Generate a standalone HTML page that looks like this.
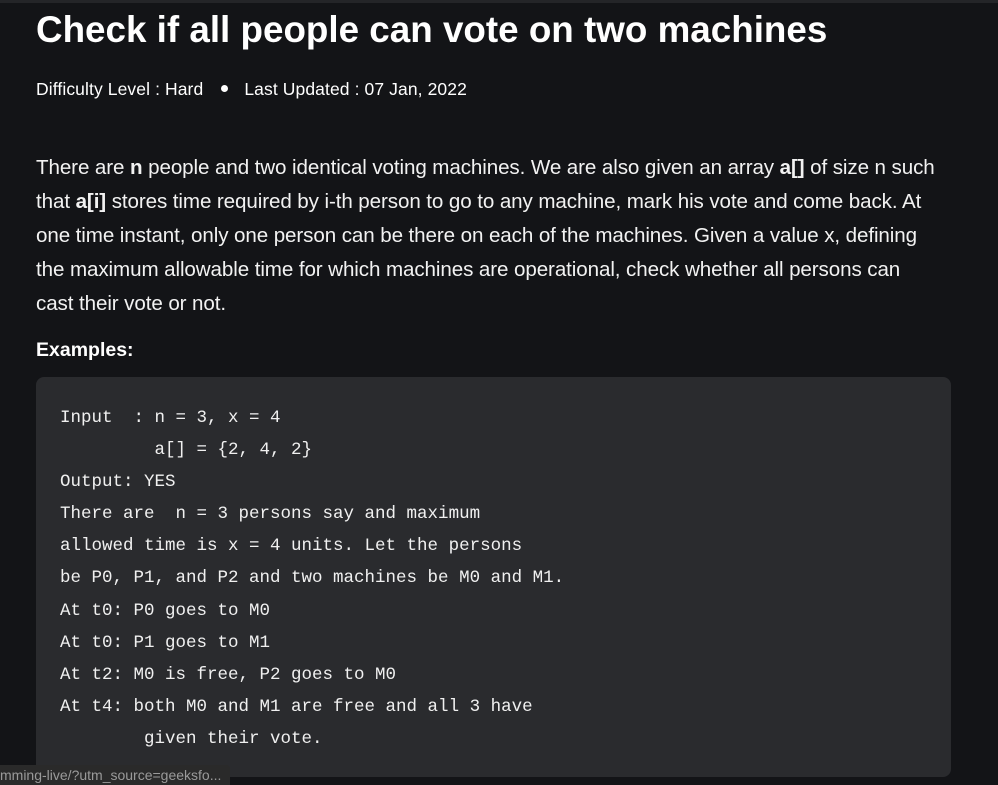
<!DOCTYPE html>
<html><head><style>
html,body{margin:0;padding:0;background:#131417;width:998px;height:785px;overflow:hidden;font-family:"Liberation Sans",sans-serif;color:#fff;position:relative}
.top{position:absolute;left:0;top:0;width:998px;height:3px;background:#242528}
h1{position:absolute;left:36px;top:8px;margin:0;font-size:36.8px;font-weight:bold;letter-spacing:0px;line-height:44px}
.meta{position:absolute;left:36px;top:79px;font-size:17.5px;letter-spacing:0.1px}
.meta .dot{display:inline-block;width:7px;height:7px;border-radius:50%;background:#fff;margin:0 16px 3px 18px;vertical-align:middle}
.p{position:absolute;left:36px;top:151px;width:960px;font-size:20.6px;line-height:34px;letter-spacing:-0.1px;color:#f2f2f2;white-space:nowrap}
.ex{position:absolute;left:36px;top:339px;font-size:19.5px;font-weight:bold}
.code{position:absolute;left:36px;top:377px;width:915px;height:400px;background:#2a2b2e;border-radius:8px}
pre{position:absolute;left:60px;top:402px;margin:0;font-family:"Liberation Mono",monospace;font-size:17.5px;line-height:32.1px;color:#f0f0f0}
.status{position:absolute;left:0;top:765px;width:230px;height:20px;background:#2a2a2a;border-top-right-radius:4px;color:#9a9a9a;font-size:14px;line-height:20px;white-space:nowrap;overflow:hidden}
</style></head><body>
<div class="top"></div>
<h1>Check if all people can vote on two machines</h1>
<div class="meta">Difficulty Level : Hard<span class="dot"></span>Last Updated : 07 Jan, 2022</div>
<div class="p">There are <b>n</b> people and two identical voting machines. We are also given an array <b>a[]</b> of size n such<br>that <b>a[i]</b> stores time required by i-th person to go to any machine, mark his vote and come back. At<br>one time instant, only one person can be there on each of the machines. Given a value x, defining<br>the maximum allowable time for which machines are operational, check whether all persons can<br>cast their vote or not.</div>
<div class="ex">Examples:</div>
<div class="code"></div>
<pre>Input  : n = 3, x = 4
         a[] = {2, 4, 2}
Output: YES
There are  n = 3 persons say and maximum
allowed time is x = 4 units. Let the persons
be P0, P1, and P2 and two machines be M0 and M1.
At t0: P0 goes to M0
At t0: P1 goes to M1
At t2: M0 is free, P2 goes to M0
At t4: both M0 and M1 are free and all 3 have
        given their vote.</pre>
<div class="status">mming-live/?utm_source=geeksfo...</div>
</body></html>
